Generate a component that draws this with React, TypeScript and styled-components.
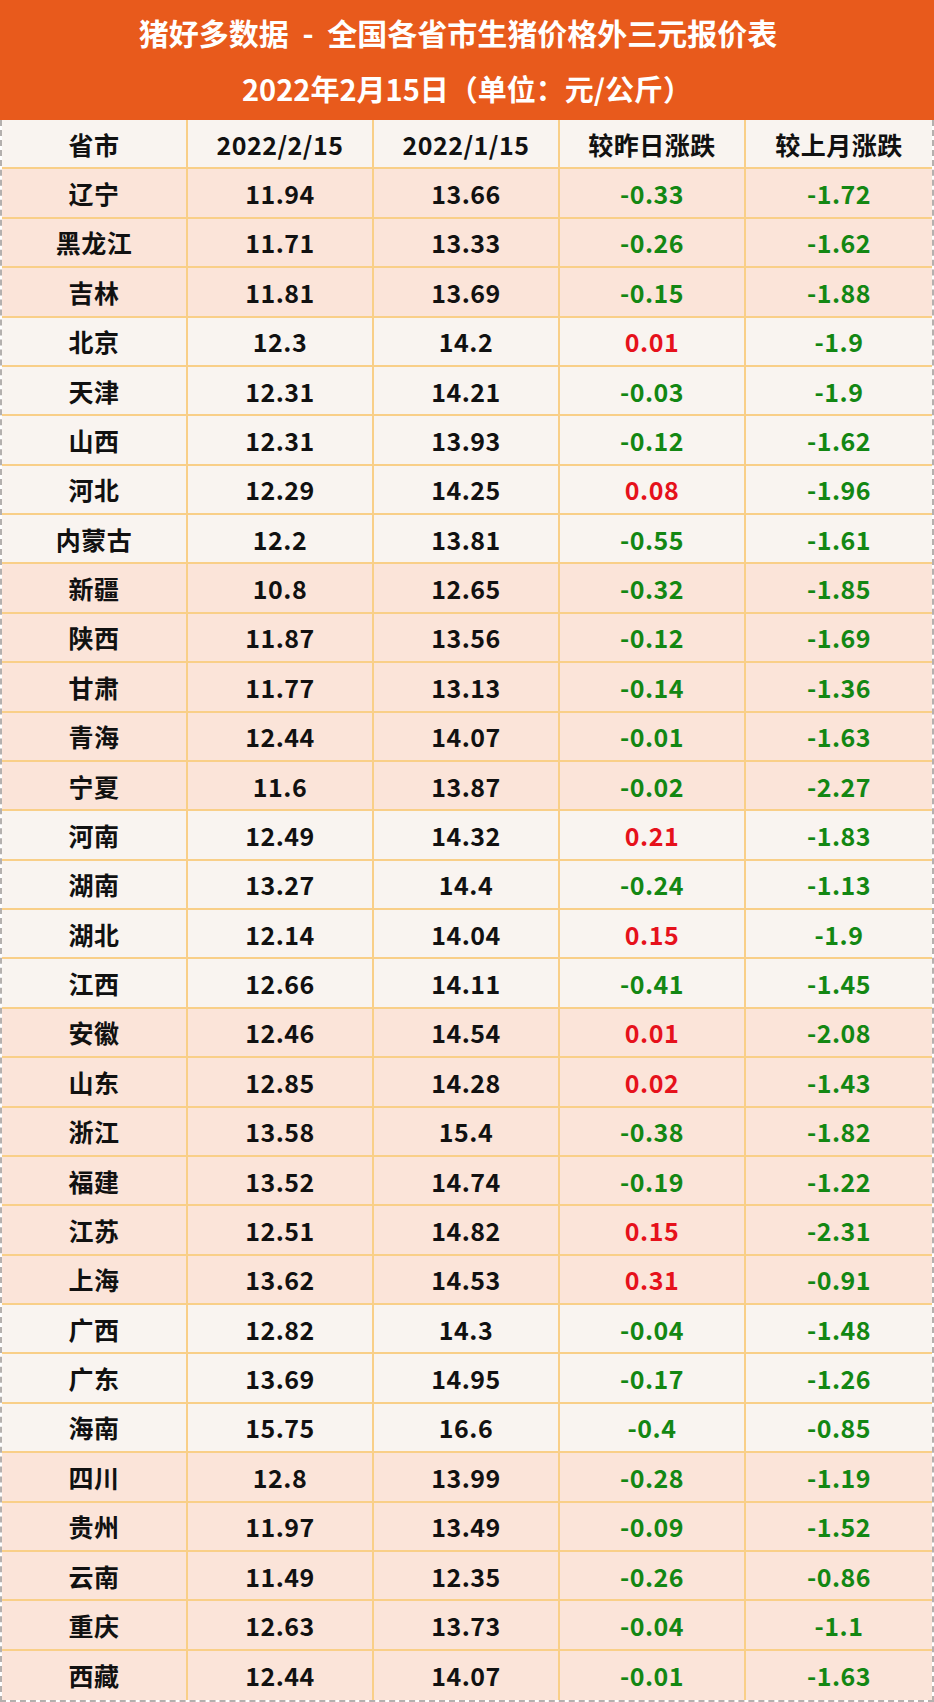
import styled, { createGlobalStyle } from "styled-components";

const GlobalStyle = createGlobalStyle`
  html, body {
    margin: 0;
    padding: 0;
    background: #ffffff;
  }
  body {
    font-family: "Noto Sans CJK SC", "Noto Sans", sans-serif;
  }
`;

const Page = styled.div`
  width: 934px;
  height: 1702px;
  display: flex;
  flex-direction: column;
  overflow: hidden;
`;

const TitleBand = styled.div`
  height: 120px;
  background: #e85a1c;
  color: #ffffff;
  display: flex;
  flex-direction: column;
  align-items: center;
  justify-content: center;
  gap: 14px;
  font-weight: 700;
  line-height: 42px;
`;

const TitleLine = styled.div<{ $size: number; $shift?: number }>`
  white-space: pre;
  font-size: ${({ $size }) => $size}px;
  padding-right: ${({ $shift }) => $shift ?? 0}px;
`;

const Table = styled.div`
  flex: 1;
  display: grid;
  grid-template-columns: repeat(5, 1fr);
  grid-auto-rows: 49.375px;
  border-left: 2px dashed #b4b0ae;
  border-right: 2px dashed #b4b0ae;
  border-bottom: 2px dashed #b4b0ae;
`;

const Cell = styled.div<{ $bg: string; $color: string; $last: boolean; $lastRow: boolean }>`
  display: flex;
  align-items: center;
  justify-content: center;
  background: ${({ $bg }) => $bg};
  color: ${({ $color }) => $color};
  border-right: ${({ $last }) => ($last ? "none" : "2px solid #f9cf88")};
  border-bottom: ${({ $lastRow }) => ($lastRow ? "none" : "2px solid #f9cf88")};
  box-sizing: border-box;
  font-size: 25px;
  font-weight: 700;
  letter-spacing: 0.5px;
  white-space: nowrap;
`;

const PEACH = "#fbe4d9";
const LIGHT = "#f9f4f0";

type Row = [string, string, string, string, string, boolean];

const rows: Row[] = [
  ["辽宁", "11.94", "13.66", "-0.33", "-1.72", true],
  ["黑龙江", "11.71", "13.33", "-0.26", "-1.62", true],
  ["吉林", "11.81", "13.69", "-0.15", "-1.88", true],
  ["北京", "12.3", "14.2", "0.01", "-1.9", false],
  ["天津", "12.31", "14.21", "-0.03", "-1.9", false],
  ["山西", "12.31", "13.93", "-0.12", "-1.62", false],
  ["河北", "12.29", "14.25", "0.08", "-1.96", false],
  ["内蒙古", "12.2", "13.81", "-0.55", "-1.61", false],
  ["新疆", "10.8", "12.65", "-0.32", "-1.85", true],
  ["陕西", "11.87", "13.56", "-0.12", "-1.69", true],
  ["甘肃", "11.77", "13.13", "-0.14", "-1.36", true],
  ["青海", "12.44", "14.07", "-0.01", "-1.63", true],
  ["宁夏", "11.6", "13.87", "-0.02", "-2.27", true],
  ["河南", "12.49", "14.32", "0.21", "-1.83", false],
  ["湖南", "13.27", "14.4", "-0.24", "-1.13", false],
  ["湖北", "12.14", "14.04", "0.15", "-1.9", false],
  ["江西", "12.66", "14.11", "-0.41", "-1.45", false],
  ["安徽", "12.46", "14.54", "0.01", "-2.08", true],
  ["山东", "12.85", "14.28", "0.02", "-1.43", true],
  ["浙江", "13.58", "15.4", "-0.38", "-1.82", true],
  ["福建", "13.52", "14.74", "-0.19", "-1.22", true],
  ["江苏", "12.51", "14.82", "0.15", "-2.31", true],
  ["上海", "13.62", "14.53", "0.31", "-0.91", true],
  ["广西", "12.82", "14.3", "-0.04", "-1.48", false],
  ["广东", "13.69", "14.95", "-0.17", "-1.26", false],
  ["海南", "15.75", "16.6", "-0.4", "-0.85", false],
  ["四川", "12.8", "13.99", "-0.28", "-1.19", true],
  ["贵州", "11.97", "13.49", "-0.09", "-1.52", true],
  ["云南", "11.49", "12.35", "-0.26", "-0.86", true],
  ["重庆", "12.63", "13.73", "-0.04", "-1.1", true],
  ["西藏", "12.44", "14.07", "-0.01", "-1.63", true],
];

const headers = ["省市", "2022/2/15", "2022/1/15", "较昨日涨跌", "较上月涨跌"];

const changeColor = (v: string) => (v.startsWith("-") ? "#138713" : "#e6111b");

const App = () => {
  return (
    <Page>
      <GlobalStyle />
      <TitleBand>
        <TitleLine $size={30} $shift={18}>猪好多数据  -  全国各省市生猪价格外三元报价表</TitleLine>
        <TitleLine $size={29}>2022年2月15日（单位：元/公斤）</TitleLine>
      </TitleBand>
      <Table>
        {headers.map((h, i) => (
          <Cell key={h} $bg={LIGHT} $color="#111111" $last={i === 4} $lastRow={false}>
            {h}
          </Cell>
        ))}
        {rows.map((r, ri) => {
          const bg = r[5] ? PEACH : LIGHT;
          const lastRow = ri === rows.length - 1;
          return [0, 1, 2, 3, 4].map((ci) => (
            <Cell
              key={`${r[0]}-${ci}`}
              $bg={bg}
              $color={ci >= 3 ? changeColor(r[ci] as string) : "#111111"}
              $last={ci === 4}
              $lastRow={lastRow}
            >
              {r[ci] as string}
            </Cell>
          ));
        })}
      </Table>
    </Page>
  );
};

export default App;
